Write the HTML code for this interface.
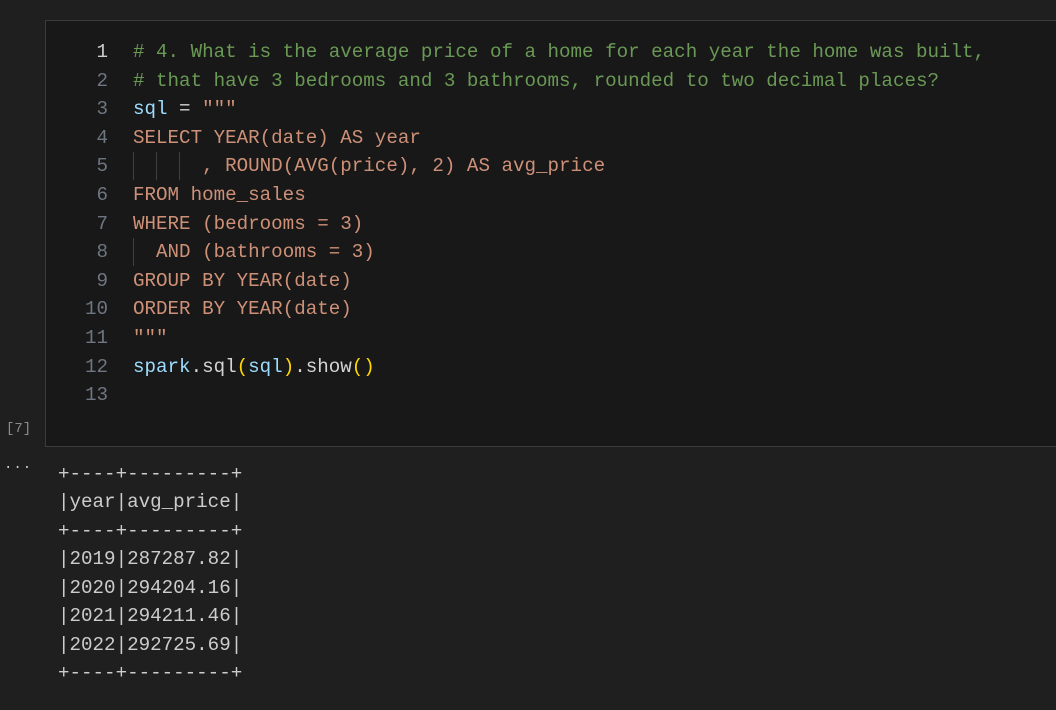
<!DOCTYPE html>
<html><head><meta charset="utf-8"><style>
html,body{margin:0;padding:0;width:1056px;height:710px;background:#1f1f1f;overflow:hidden;font-family:"Liberation Mono",monospace;}
.cell{position:absolute;left:45px;top:20px;width:1015px;height:425px;background:#181818;border:1px solid #3c3c3c;}
.code{position:absolute;left:0;top:17px;width:1000px;height:380px;font-size:19.2px;line-height:28.6px;}
.ln{position:absolute;left:0;width:62px;text-align:right;color:#6e7681;}
.tx{position:absolute;left:87px;top:0;color:#d4d4d4;white-space:pre;}
.c{color:#6a9955}.s{color:#ce9178}.v{color:#9cdcfe}.y{color:#ffd700}
.g{display:inline-block;width:11.52px;height:28px;vertical-align:top;box-sizing:border-box;border-left:1px solid #404040;}
.n{display:inline-block;width:11.52px;height:28px;vertical-align:top;}
.lab{position:absolute;left:6px;top:421px;color:#8b8b8b;font-size:14px;}
.dots{position:absolute;left:4px;top:460px;color:#ccc;font-size:14px;letter-spacing:1px;}
.out{position:absolute;left:58px;top:460px;font-size:19.2px;line-height:28.45px;white-space:pre;color:#cccccc;}
</style></head><body>
<div class="cell"><div class="code"><div class="ln" style="top:0;color:#cccccc">1</div><div class="ln" style="top:28.6px">2</div><div class="ln" style="top:57.2px">3</div><div class="ln" style="top:85.8px">4</div><div class="ln" style="top:114.4px">5</div><div class="ln" style="top:143px">6</div><div class="ln" style="top:171.6px">7</div><div class="ln" style="top:200.2px">8</div><div class="ln" style="top:228.8px">9</div><div class="ln" style="top:257.4px">10</div><div class="ln" style="top:286px">11</div><div class="ln" style="top:314.6px">12</div><div class="ln" style="top:343.2px">13</div><div class="tx"><span class="c"># 4. What is the average price of a home for each year the home was built,</span>
<span class="c"># that have 3 bedrooms and 3 bathrooms, rounded to two decimal places?</span>
<span class="v">sql</span> = <span class="s">"""</span>
<span class="s">SELECT YEAR(date) AS year</span>
<span class="g"></span><span class="n"></span><span class="g"></span><span class="n"></span><span class="g"></span><span class="n"></span><span class="s">, ROUND(AVG(price), 2) AS avg_price</span>
<span class="s">FROM home_sales</span>
<span class="s">WHERE (bedrooms = 3)</span>
<span class="g"></span><span class="n"></span><span class="s">AND (bathrooms = 3)</span>
<span class="s">GROUP BY YEAR(date)</span>
<span class="s">ORDER BY YEAR(date)</span>
<span class="s">"""</span>
<span class="v">spark</span>.sql<span class="y">(</span><span class="v">sql</span><span class="y">)</span>.show<span class="y">()</span>
</div></div></div>
<div class="lab">[7]</div>
<div class="dots">···</div>
<div class="out">+----+---------+
|year|avg_price|
+----+---------+
|2019|287287.82|
|2020|294204.16|
|2021|294211.46|
|2022|292725.69|
+----+---------+</div>
</body></html>
